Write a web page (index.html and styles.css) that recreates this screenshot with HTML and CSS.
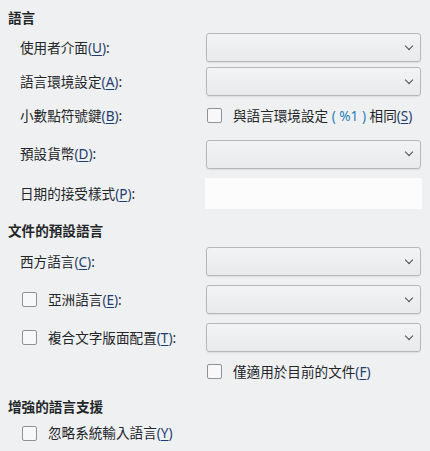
FILE: index.html
```html
<!DOCTYPE html>
<html lang="zh-Hant">
<head>
<meta charset="utf-8">
<link rel="stylesheet" href="styles.css">
</head>
<body>
<div class="page">
  <div class="heading h1">語言</div>
  <div class="grid g1">
    <div class="label">使用者介面<span class="mn">(<u>U</u>)</span>:</div>
    <div class="combo"><span class="chev"></span></div>

    <div class="label">語言環境設定<span class="mn">(<u>A</u>)</span>:</div>
    <div class="combo"><span class="chev"></span></div>

    <div class="label">小數點符號鍵<span class="mn">(<u>B</u>)</span>:</div>
    <div class="check"><span class="box"></span><span>與語言環境設定 <span class="blue">( %1 )</span> 相同<span class="mn">(<u>S</u>)</span></span></div>

    <div class="label">預設貨幣<span class="mn">(<u>D</u>)</span>:</div>
    <div class="combo"><span class="chev"></span></div>

    <div class="label">日期的接受樣式<span class="mn">(<u>P</u>)</span>:</div>
    <div class="input"></div>
  </div>

  <div class="heading h2">文件的預設語言</div>
  <div class="grid g2">
    <div class="label">西方語言<span class="mn">(<u>C</u>)</span>:</div>
    <div class="combo"><span class="chev"></span></div>

    <div class="label check lc"><span class="box"></span><span>亞洲語言<span class="mn">(<u>E</u>)</span>:</span></div>
    <div class="combo"><span class="chev"></span></div>

    <div class="label check lc"><span class="box"></span><span>複合文字版面配置<span class="mn">(<u>T</u>)</span>:</span></div>
    <div class="combo"><span class="chev"></span></div>

    <div></div>
    <div class="check"><span class="box"></span><span>僅適用於目前的文件<span class="mn">(<u>F</u>)</span></span></div>
  </div>

  <div class="heading h3">增強的語言支援</div>
  <div class="check solo"><span class="box"></span><span>忽略系統輸入語言<span class="mn">(<u>Y</u>)</span></span></div>
</div>
</body>
</html>
```
FILE: styles.css
```css
html, body {
  margin: 0;
  padding: 0;
  background: #eff0f1;
}
body {
  font-family: "Noto Sans", "Noto Sans CJK TC", sans-serif;
  font-size: 13.6px;
  color: #232629;
  width: 430px;
  height: 451px;
  overflow: hidden;
}
.page {
  padding: 9px 0 0 0;
}
.heading {
  font-weight: 700;
  line-height: 18px;
  height: 18px;
  padding-left: 8px;
}
.h2 { margin-top: 13px; }
.h3 { margin-top: 16px; }
.grid {
  display: grid;
  grid-template-columns: 186px 215px;
  row-gap: 9px;
  padding-left: 20px;
  align-items: center;
}
.g1 { margin-top: 6px; grid-template-rows: 29px 21px 29px 30px; }
.g2 { margin-top: 7px; grid-template-rows: 29px 29px 29px 21px; }
.label {
  line-height: 20px;
  white-space: nowrap;
}
.mn { color: #1f3d6e; }
.mn u { text-decoration-thickness: 1px; text-underline-offset: 2px; }
.blue { color: #2980b9; }
.combo {
  height: 27px;
  border: 1px solid #b6b8ba;
  border-radius: 3px;
  background: linear-gradient(#f2f3f4, #e9eaeb);
  box-shadow: 0 1px 1px rgba(0,0,0,0.08);
  display: flex;
  align-items: center;
  justify-content: flex-end;
  padding-right: 8px;
}
.chev {
  width: 5px;
  height: 5px;
  border-right: 1.3px solid #4a4d50;
  border-bottom: 1.3px solid #4a4d50;
  transform: rotate(45deg);
  margin-top: -4px;
}
.input {
  height: 31px;
  background: #fcfcfc;
  margin-left: -1px;
  margin-right: -1px;
}
.check {
  display: flex;
  align-items: center;
  gap: 11px;
  line-height: 20px;
  white-space: nowrap;
}
.box {
  width: 13px;
  height: 13px;
  border: 1px solid #8f9295;
  border-radius: 2px;
  background: #f8f8f9;
  flex: none;
}
.g2 .check:not(.lc), .g1 .check { margin-left: 1px; }
.lc { margin-left: 2px; }
.solo {
  margin-top: 7px;
  padding-left: 22px;
}
```
